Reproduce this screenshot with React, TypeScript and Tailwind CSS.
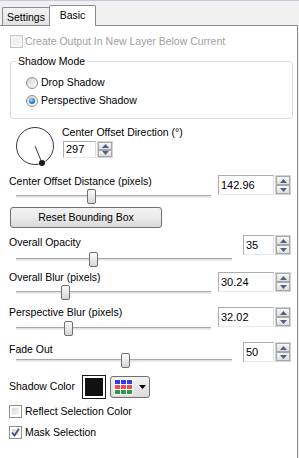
import React from "react";

function SpinBtn({ up }: { up?: boolean }) {
  return (
    <div className="flex-1 border border-[#a7a7a7] bg-gradient-to-b from-[#f8f8f8] to-[#dedede] flex items-center justify-center">
      <svg width="7" height="4" viewBox="0 0 7 4">
        {up ? <path d="M0 4 L3.5 0 L7 4 Z" fill="#4d6185" /> : <path d="M0 0 L3.5 4 L7 0 Z" fill="#4d6185" />}
      </svg>
    </div>
  );
}

function SpinBox({ value, w, h }: { value: string; w: string; h: string }) {
  return (
    <div className={`flex ${h}`}>
      <div
        className={`${w} h-full border border-[#abadb3] border-r-[#dbdfe6] border-b-[#e3e9ef] bg-white flex items-center pl-[2px] text-[11px] leading-none text-black`}
      >
        {value}
      </div>
      <div className="ml-px flex flex-col w-[16px] h-full border border-[#d4d4d4]">
        <SpinBtn up />
        <SpinBtn />
      </div>
    </div>
  );
}

function Slider({ w, mt, thumb }: { w: string; mt: string; thumb: number }) {
  return (
    <div className={`relative ml-[16px] h-[16px] ${w} ${mt}`}>
      <div className="absolute left-0 right-0 top-[7px] h-[3px] border-t border-t-[#a9a9a9] border-b border-b-[#ececec] bg-[#e2e2e2]" />
      <div
        className="absolute top-px h-[15px] w-[9px] rounded-[2px] border border-[#707070] bg-gradient-to-b from-[#fcfcfc] to-[#d6d6d6]"
        style={{ left: thumb }}
      />
    </div>
  );
}

function SliderRow({
  label,
  value,
  rowMt,
  sliderMt,
  boxMt,
  boxW,
  trackW,
  thumb,
}: {
  label: string;
  value: string;
  rowMt: string;
  sliderMt: string;
  boxMt: string;
  boxW: string;
  trackW: string;
  thumb: number;
}) {
  return (
    <div className={`flex items-start justify-between pr-[6px] ${rowMt}`}>
      <div className="flex flex-col">
        <div className="ml-[9px] h-[12px] leading-[12px]">{label}</div>
        <Slider w={trackW} mt={sliderMt} thumb={thumb} />
      </div>
      <div className={boxMt}>
        <SpinBox value={value} w={boxW} h="h-[20px]" />
      </div>
    </div>
  );
}

function CheckBox({ checked, disabled }: { checked?: boolean; disabled?: boolean }) {
  return (
    <div
      className={`w-[13px] h-[13px] border ${disabled ? "border-[#c6c6c6] bg-[#f4f4f4]" : "border-[#8e8f8f] bg-white"} p-[2px] relative`}
    >
      <div
        className={`w-full h-full ${disabled ? "bg-[#f0f0f0]" : "bg-gradient-to-br from-[#d8d8d8] to-[#f8f8f8]"}`}
      />
      {checked && (
        <svg className="absolute left-0 top-0" width="11" height="11" viewBox="0 0 11 11">
          <path d="M2 5.5 L4.5 8.5 L9 1.8" fill="none" stroke="#3d4f86" strokeWidth="1.8" />
        </svg>
      )}
    </div>
  );
}

function Radio({ checked }: { checked?: boolean }) {
  return (
    <div className="w-[12px] h-[12px] rounded-full border border-[#8e8f8f] bg-gradient-to-br from-[#d6d6d6] to-[#fbfbfb] flex items-center justify-center">
      {checked && (
        <div className="w-[6px] h-[6px] rounded-full bg-[radial-gradient(circle_at_40%_35%,#a8e0ff,#2a7bc4_55%,#154f86)]" />
      )}
    </div>
  );
}

export default function App() {
  return (
    <div className="w-[299px] h-[458px] bg-[#f0f0f0] border-t border-[#c8c8dc] overflow-hidden flex flex-col font-['Liberation_Sans',Arial,sans-serif] text-[10.5px] text-black">
      <div className="h-[24px] flex items-end pl-[2px] shrink-0">
        <div className="w-[47px] h-[18px] border border-b-0 border-r-0 border-[#898c95] bg-gradient-to-b from-[#f3f3f3] to-[#e1e1e1] flex items-center justify-center pt-[2px] rounded-tl-[2px]">
          Settings
        </div>
        <div className="relative z-10 -mb-px w-[47px] h-[21px] border border-b-0 border-[#898c95] bg-white flex items-center justify-center rounded-t-[2px]">
          Basic
        </div>
      </div>
      <div className="flex-1 w-[298px] border-t border-r border-[#898c95] bg-white flex flex-col">
        <div className="mt-[9px] ml-[10px] flex items-center h-[13px]">
          <CheckBox disabled />
          <span className="ml-[2px] text-[#a0a0a0]">Create Output In New Layer Below Current</span>
        </div>

        <div className="relative mt-[13px] ml-[10px] w-[283px] h-[58px] border border-[#d5dfe5] rounded-[3px] pt-[15px] pl-[15px]">
          <div className="absolute -top-[7px] left-[5px] px-[2px] bg-white leading-[12px]">Shadow Mode</div>
          <div className="flex items-center h-[12px]">
            <Radio />
            <span className="ml-[3px]">Drop Shadow</span>
          </div>
          <div className="flex items-center h-[12px] mt-[6px]">
            <Radio checked />
            <span className="ml-[3px]">Perspective Shadow</span>
          </div>
        </div>

        <div className="mt-[7px] ml-[15px] flex items-start">
          <svg width="40" height="40" viewBox="0 0 40 40">
            <circle cx="20" cy="20" r="18.5" fill="none" stroke="#3a3a3a" strokeWidth="1" />
            <line x1="20" y1="20" x2="27" y2="37" stroke="#3a3a3a" strokeWidth="1" />
            <circle cx="27" cy="37" r="3" fill="#1a1a1a" />
          </svg>
          <div className="ml-[7px] flex flex-col">
            <div className="h-[12px] leading-[12px]">Center Offset Direction (°)</div>
            <div className="mt-[3px] ml-px">
              <SpinBox value="297" w="w-[33px]" h="h-[17px]" />
            </div>
          </div>
        </div>

        <SliderRow
          label="Center Offset Distance (pixels)"
          value="142.96"
          rowMt="mt-[9px]"
          sliderMt="mt-px"
          boxMt="mt-0"
          boxW="w-[56px]"
          trackW="w-[195px]"
          thumb={71}
        />

        <div className="mt-[3px] ml-[10px] w-[152px] h-[21px] border border-[#707070] rounded-[3px] bg-gradient-to-b from-[#f2f2f2] via-[#ebebeb] to-[#d8d8d8] flex items-center justify-center">
          Reset Bounding Box
        </div>

        <SliderRow
          label="Overall Opacity"
          value="35"
          rowMt="mt-[8px]"
          sliderMt="mt-[3px]"
          boxMt="-mt-px"
          boxW="w-[31px]"
          trackW="w-[216px]"
          thumb={73}
        />
        <SliderRow
          label="Overall Blur (pixels)"
          value="30.24"
          rowMt="mt-[4px]"
          sliderMt="mt-px"
          boxMt="mt-px"
          boxW="w-[56px]"
          trackW="w-[195px]"
          thumb={45}
        />
        <SliderRow
          label="Perspective Blur (pixels)"
          value="32.02"
          rowMt="mt-[6px]"
          sliderMt="mt-[2px]"
          boxMt="mt-px"
          boxW="w-[56px]"
          trackW="w-[195px]"
          thumb={48}
        />
        <SliderRow
          label="Fade Out"
          value="50"
          rowMt="mt-[7px]"
          sliderMt="-mt-[3px]"
          boxMt="-mt-px"
          boxW="w-[31px]"
          trackW="w-[216px]"
          thumb={105}
        />

        <div className="mt-[7px] flex items-center h-[24px]">
          <div className="ml-[9px] w-[73px]">Shadow Color</div>
          <div className="w-[24px] h-[24px] border border-[#1a1a1a] bg-white p-[2px]">
            <div className="w-full h-full bg-[#111111]" />
          </div>
          <div className="ml-[4px] w-[40px] h-[22px] border border-[#707070] rounded-[3px] bg-gradient-to-b from-[#f2f2f2] to-[#dcdcdc] flex items-center pl-[3px]">
            <div className="grid grid-cols-3 gap-px bg-white p-px">
              <div className="w-[5px] h-[4px] bg-[#2f3cf2]" />
              <div className="w-[5px] h-[4px] bg-[#2f3cf2]" />
              <div className="w-[5px] h-[4px] bg-[#2f3cf2]" />
              <div className="w-[5px] h-[4px] bg-[#f24a4a]" />
              <div className="w-[5px] h-[4px] bg-[#f24a4a]" />
              <div className="w-[5px] h-[4px] bg-[#f24a4a]" />
              <div className="w-[5px] h-[4px] bg-[#2e9a48]" />
              <div className="w-[5px] h-[4px] bg-[#2e9a48]" />
              <div className="w-[5px] h-[4px] bg-[#2e9a48]" />
            </div>
            <svg className="ml-[6px]" width="7" height="4" viewBox="0 0 7 4">
              <path d="M0 0 L7 0 L3.5 4 Z" fill="#000" />
            </svg>
          </div>
        </div>

        <div className="mt-[6px] ml-[9px] flex items-center h-[13px]">
          <CheckBox />
          <span className="ml-[3px]">Reflect Selection Color</span>
        </div>
        <div className="mt-[8px] ml-[9px] flex items-center h-[13px]">
          <CheckBox checked />
          <span className="ml-[3px]">Mask Selection</span>
        </div>
      </div>
    </div>
  );
}
